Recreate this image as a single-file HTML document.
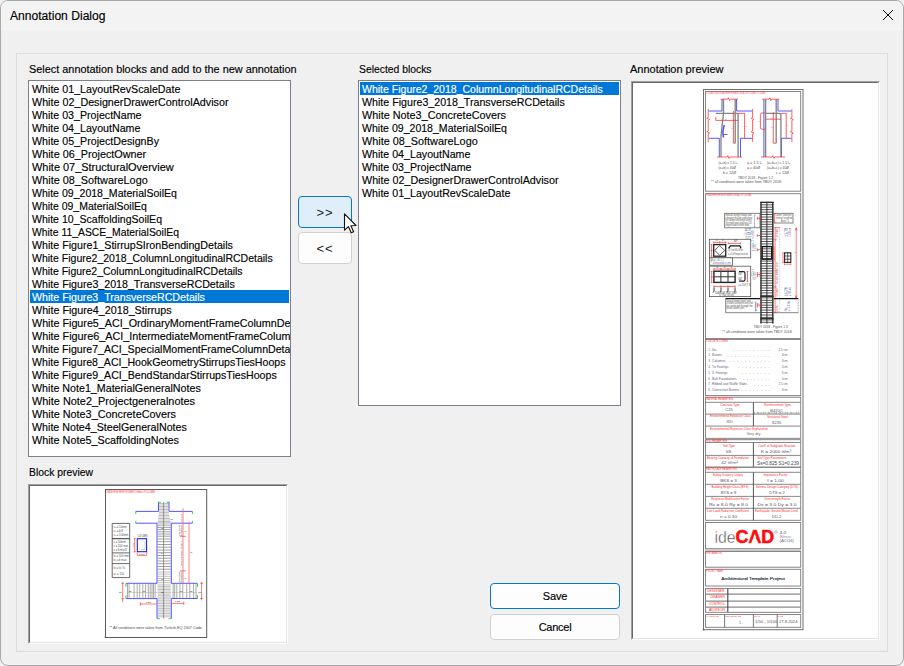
<!DOCTYPE html>
<html><head><meta charset="utf-8"><title>Annotation Dialog</title>
<style>
html,body{margin:0;padding:0;width:904px;height:666px;overflow:hidden;background:#f0f0f0;font-family:"Liberation Sans", sans-serif;font-size:11px;color:#000;-webkit-text-stroke:0.15px currentColor}
#win{position:absolute;left:0;top:0;width:902px;height:664px;border:1px solid #a9a9a9;border-radius:8px;background:#f0f0f0;overflow:hidden}
#tb{position:absolute;left:0;top:0;width:902px;height:30px;background:#f3f3f3}
.abs{position:absolute}
.lab{position:absolute;line-height:13px;height:13px;white-space:nowrap}
.lb span{position:relative;top:0.6px}
.lab span,.lb span{display:inline-block;transform-origin:0 50%;white-space:nowrap}
#grp{position:absolute;left:16px;top:53px;width:870px;height:597px;border:1px solid #dcdcdc}
.lb{position:absolute;background:#fff;border:1px solid #7b818c;box-sizing:border-box;padding:1px;overflow:hidden}
.lb div{height:13px;line-height:13px;padding-left:2px;white-space:nowrap;overflow:visible}
.lb div.sel{background:#0078d7;color:#fff}
.btn{position:absolute;box-sizing:border-box;border:1px solid #d0d0d0;border-radius:4px;background:#fdfdfd;text-align:center;line-height:13px}
.sunk{position:absolute;box-sizing:border-box;background:#fff;border-style:solid;border-width:1px;border-color:#a0a0a0 #fff #fff #a0a0a0}
.sunk>i{position:absolute;left:0;top:0;right:0;bottom:0;border-style:solid;border-width:1px;border-color:#696969 #e3e3e3 #e3e3e3 #696969}
svg{position:absolute;left:0;top:0}
</style></head><body>
<div id="win">
<div id="tb"></div>
</div>
<div class="lab" style="left:10px;top:9px;font-size:12px;line-height:15px;height:15px"><span style="transform:scaleX(1.0081)">Annotation Dialog</span></div>
<svg class="abs" style="left:882px;top:9px" width="12" height="12" viewBox="0 0 12 12"><path d="M1 1L11 11M11 1L1 11" stroke="#000" stroke-width="1" fill="none"/></svg>
<div id="grp"></div>
<div class="lab" style="left:28.8px;top:63px"><span style="transform:scaleX(0.9896)">Select annotation blocks and add to the new annotation</span></div>
<div class="lab" style="left:358.8px;top:63px"><span style="transform:scaleX(0.9410)">Selected blocks</span></div>
<div class="lab" style="left:630.3px;top:63px"><span style="transform:scaleX(0.9993)">Annotation preview</span></div>
<div class="lab" style="left:28.8px;top:466px"><span style="transform:scaleX(0.9431)">Block preview</span></div>
<div class="lb" style="left:28px;top:80px;width:263px;height:377px">
<div><span style="transform:scaleX(0.9707)">White 01_LayoutRevScaleDate</span></div>
<div><span style="transform:scaleX(0.9769)">White 02_DesignerDrawerControlAdvisor</span></div>
<div><span style="transform:scaleX(0.9681)">White 03_ProjectName</span></div>
<div><span style="transform:scaleX(0.9687)">White 04_LayoutName</span></div>
<div><span style="transform:scaleX(0.9706)">White 05_ProjectDesignBy</span></div>
<div><span style="transform:scaleX(0.9830)">White 06_ProjectOwner</span></div>
<div><span style="transform:scaleX(0.9947)">White 07_StructuralOverview</span></div>
<div><span style="transform:scaleX(0.9853)">White 08_SoftwareLogo</span></div>
<div><span style="transform:scaleX(0.9593)">White 09_2018_MaterialSoilEq</span></div>
<div><span style="transform:scaleX(0.9531)">White 09_MaterialSoilEq</span></div>
<div><span style="transform:scaleX(0.9590)">White 10_ScaffoldingSoilEq</span></div>
<div><span style="transform:scaleX(0.9435)">White 11_ASCE_MaterialSoilEq</span></div>
<div><span style="transform:scaleX(0.9692)">White Figure1_StirrupSIronBendingDetails</span></div>
<div><span style="transform:scaleX(0.9555)">White Figure2_2018_ColumnLongitudinalRCDetails</span></div>
<div><span style="transform:scaleX(0.9515)">White Figure2_ColumnLongitudinalRCDetails</span></div>
<div><span style="transform:scaleX(0.9685)">White Figure3_2018_TransverseRCDetails</span></div>
<div class="sel"><span style="transform:scaleX(0.9674)">White Figure3_TransverseRCDetails</span></div>
<div><span style="transform:scaleX(0.9757)">White Figure4_2018_Stirrups</span></div>
<div><span style="transform:scaleX(0.9762)">White Figure5_ACI_OrdinaryMomentFrameColumnDetails</span></div>
<div><span style="transform:scaleX(0.9811)">White Figure6_ACI_IntermediateMomentFrameColumnDetails</span></div>
<div><span style="transform:scaleX(0.9652)">White Figure7_ACI_SpecialMomentFrameColumnDetails</span></div>
<div><span style="transform:scaleX(0.9635)">White Figure8_ACI_HookGeometryStirrupsTiesHoops</span></div>
<div><span style="transform:scaleX(0.9659)">White Figure9_ACI_BendStandarStirrupsTiesHoops</span></div>
<div><span style="transform:scaleX(0.9721)">White Note1_MaterialGeneralNotes</span></div>
<div><span style="transform:scaleX(0.9910)">White Note2_Projectgeneralnotes</span></div>
<div><span style="transform:scaleX(0.9855)">White Note3_ConcreteCovers</span></div>
<div><span style="transform:scaleX(0.9700)">White Note4_SteelGeneralNotes</span></div>
<div><span style="transform:scaleX(0.9819)">White Note5_ScaffoldingNotes</span></div>
</div>
<div class="lb" style="left:358px;top:80px;width:263px;height:326px">
<div class="sel"><span style="transform:scaleX(0.9555)">White Figure2_2018_ColumnLongitudinalRCDetails</span></div>
<div><span style="transform:scaleX(0.9685)">White Figure3_2018_TransverseRCDetails</span></div>
<div><span style="transform:scaleX(0.9855)">White Note3_ConcreteCovers</span></div>
<div><span style="transform:scaleX(0.9593)">White 09_2018_MaterialSoilEq</span></div>
<div><span style="transform:scaleX(0.9853)">White 08_SoftwareLogo</span></div>
<div><span style="transform:scaleX(0.9687)">White 04_LayoutName</span></div>
<div><span style="transform:scaleX(0.9681)">White 03_ProjectName</span></div>
<div><span style="transform:scaleX(0.9769)">White 02_DesignerDrawerControlAdvisor</span></div>
<div><span style="transform:scaleX(0.9707)">White 01_LayoutRevScaleDate</span></div>
</div>
<div class="btn" style="left:298px;top:196px;width:54px;height:32px;background:#e0eef9;border-color:#0078d4;padding-top:9px;font-size:13px;letter-spacing:0.8px;-webkit-text-stroke:0;color:#222">&gt;&gt;</div>
<div class="btn" style="left:298px;top:232px;width:54px;height:32px;padding-top:9px;font-size:13px;letter-spacing:0.8px;-webkit-text-stroke:0;color:#222">&lt;&lt;</div>
<div class="btn" style="left:490px;top:583px;width:130px;height:26px;border-color:#0078d4;padding-top:5.5px;letter-spacing:-0.15px">Save</div>
<div class="btn" style="left:490px;top:614px;width:130px;height:26px;padding-top:5.5px;letter-spacing:-0.25px">Cancel</div>
<div class="sunk" style="left:28px;top:484px;width:260px;height:160px"><i></i></div>
<div class="sunk" style="left:631px;top:81px;width:249px;height:559px"><i></i></div>
<svg class="abs" width="904" height="666" viewBox="0 0 904 666" font-family="Liberation Sans, sans-serif">
<rect x="105.5" y="489.5" width="101.2" height="148" fill="#fff" stroke="#5c5c5c" stroke-width="1"/>
<text x="106.3" y="492.9" font-size="3.1" fill="#ff2020" textLength="49" lengthAdjust="spacingAndGlyphs">TRANSVERSE REINFORCEMENT DETAILS OF COLUMNS</text>
<path d="M157.5 523.0H170.8M157.5 525.2H170.8M157.5 527.4H170.8M157.5 529.6H170.8M157.5 531.8H170.8M157.5 534.0H170.8M157.5 536.2H170.8M157.5 539.0H170.8M157.5 541.7H170.8M157.5 544.5H170.8M157.5 547.2H170.8M157.5 550.0H170.8M157.5 552.7H170.8M157.5 555.5H170.8M157.5 558.2H170.8M157.5 561.0H170.8M157.5 563.7H170.8M157.5 566.5H170.8M157.5 569.2H170.8" stroke="#707070" stroke-width="0.65" fill="none"/>
<path d="M159.0 503.5H168.5M159.0 505.0H168.5M159.0 506.5H168.5M159.0 508.0H168.5M159.0 509.5H168.5M159.0 511.0H168.5M158.9 512.5H168.7M158.7 514.0H169.0M158.5 515.5H169.3M158.3 517.0H169.6M158.1 518.5H169.9M157.9 520.0H170.2M157.7 521.5H170.5M157.5 572.0H170.8M157.5 574.1H170.8M157.5 576.3H170.8M157.5 578.4H170.8M157.5 580.6H170.8M157.5 582.7H170.8M157.5 584.9H170.8M157.5 586.4H170.8M157.5 588.0H170.8M157.5 589.5H170.8M157.5 591.0H170.8M157.5 592.6H170.8M157.5 594.1H170.8M157.5 595.7H170.8M157.5 597.2H170.8M157.5 598.8H170.8M157.5 600.3H170.8M157.5 602.0H170.8M157.5 603.6H170.8M157.5 605.3H170.8M157.5 606.9H170.8M157.5 608.6H170.8M157.5 610.2H170.8M157.5 611.9H170.8M157.5 613.5H170.8M157.5 615.2H170.8M157.5 616.8H170.8" stroke="#6a6a6a" stroke-width="0.42" fill="none"/>
<path d="M163.6 502V618.5" stroke="#707070" stroke-width="0.7" fill="none"/>
<path d="M127.5 584V598M129.1 584V598M134.1 584V598M137.2 584V598M139.7 584V598M142.8 584V598M145.6 584V598M148.3 584V598M150.2 584V598M152.0 584V598M153.5 584V598M155.1 584V598M173.1 584V598M174.7 584V598M176.8 584V598M179.9 584V598M182.8 584V598M186.7 584V598M189.8 584V598M193.6 584V598M196.0 584V598" stroke="#888" stroke-width="0.7" fill="none"/>
<path d="M127 592.5H157M171.3 592.5H197" stroke="#aaa" stroke-width="0.5" fill="none"/>
<path d="M158.5 502.2V511.4H135.6M169 502.2V511.4H192.4M135.6 523.2H157V583.3H125.7M192.4 523.2H171.3V583.3H197.6M125.7 598.6H157V618.6M197.6 598.5H171.3V618.6" stroke="#5454ff" stroke-width="1" fill="none"/>
<path d="M158 502.2H161M166.5 502.2H169.6M135.8 511.4V514M135.8 520.8V523.2M192.4 511.4V514M192.4 520.8V523.2M125.9 583.8V586.8M125.9 595.2V598.2M197.5 583.8V586.8M197.5 595.2V598.2M157 618.7H159.8M168.5 618.7H171.3" stroke="#30d050" stroke-width="1" fill="none"/>
<path d="M183 508.3V583.3M189 521.6V583.3" stroke="#ff6a6a" stroke-width="0.85" fill="none"/>
<path d="M179.8 536.4H185.8M179.8 570.9H185.8M122.7 582V602M121.2 583.3H124.2M121.2 598.7H124.2M201.6 582V600.4M200.1 583.3H203.1M200.1 598.5H203.1M140.3 604H156.8M140.5 602.2V605.8M171.3 603.4H184M183.8 601.6V605.2" stroke="#ff4545" stroke-width="0.7" fill="none"/>
<g font-size="2.5" fill="#222"><text transform="translate(181.6 522.3) rotate(-90)" textLength="8" lengthAdjust="spacingAndGlyphs">min 5cm</text><text transform="translate(180 536) rotate(-90)" textLength="11" lengthAdjust="spacingAndGlyphs">sarilma</text><text transform="translate(182 536) rotate(-90)" textLength="11" lengthAdjust="spacingAndGlyphs">bolgesi</text><text transform="translate(182 566) rotate(-90)" textLength="25" lengthAdjust="spacingAndGlyphs">kolon orta bolgesi  s ≤ 20cm</text><text transform="translate(180 582.5) rotate(-90)" textLength="11" lengthAdjust="spacingAndGlyphs">sarilma</text><text transform="translate(182 582.5) rotate(-90)" textLength="11" lengthAdjust="spacingAndGlyphs">bolgesi</text><text x="184.6" y="531.5">lo</text><text x="184.6" y="579">lo</text><text x="190.3" y="553">ln</text><text x="161" y="529">sc</text><text x="161" y="553.5">s</text><text x="161" y="580">sc</text><text x="161" y="592.5">sk</text><text x="170.5" y="520">sc</text><text x="146" y="603">1.5h</text><text x="175" y="602.4">1.5h</text><text x="119" y="592.5">hk</text><text x="198.3" y="592.5">hk</text><text x="129" y="591.5">sk</text><text x="143" y="591.5">sk</text><text x="180" y="592">sk</text><text x="190" y="591.5">sk</text></g>
<path d="M112.2 523.4H129.7V577.6H112.2ZM112.2 552.9H129.7M112.2 563.6H129.7" stroke="#444" stroke-width="0.8" fill="none"/>
<path d="M112.2 538.7H129.7" stroke="#333" stroke-width="1" fill="none"/>
<g font-size="2.8" fill="#555"><text x="113.5" y="528.3">s<tspan font-size="2">o</tspan> ≥ 50mm</text><text x="113.5" y="532">s<tspan font-size="2">o</tspan> ≤ b/3</text><text x="113.5" y="536.3">s<tspan font-size="2">o</tspan> ≤ 100mm</text><text x="113.5" y="543">s ≥ 50mm</text><text x="113.5" y="546.8">s ≤ 200 mm</text><text x="113.5" y="551">s ≤ b min/2</text><text x="113.5" y="556.5">lo ≥ 500 mm</text><text x="113.5" y="561">lo ≥ b max</text><text x="113.5" y="568.5">lo ≥ ln / 6</text><text x="113.5" y="574.8">sc ≤ 150</text></g>
<text x="137.4" y="536.5" font-size="2.7" fill="#444" textLength="10" lengthAdjust="spacingAndGlyphs">COLUMN</text>
<rect x="137.3" y="538.7" width="9.3" height="13" fill="none" stroke="#2525d0" stroke-width="1.1"/>
<path d="M145 541V549.5H141" stroke="#aaa" stroke-width="0.5" fill="none"/>
<path d="M134.7 538.2V552.2M133.5 538.7H135.9M133.5 551.7H135.9M137.3 552.4V555.4H146.6V552.4" stroke="#ff4545" stroke-width="0.7" fill="none"/>
<text x="139.2" y="554.7" font-size="2.3" fill="#444">b min</text>
<text transform="translate(134.3 549) rotate(-90)" font-size="2.3" fill="#444">b max</text>
<text x="109.3" y="628.7" font-size="3.4" fill="#4a4a4a" textLength="92.6" lengthAdjust="spacingAndGlyphs">**  All conditions were taken from Turkish EQ 2007 Code</text>
<rect x="104.7" y="636.5" width="1.4" height="1.4" fill="#6040d0"/>
</svg>
<svg class="abs" width="904" height="666" viewBox="0 0 904 666" font-family="Liberation Sans, sans-serif">
<rect x="703.5" y="89.5" width="99.5" height="540.2" stroke="#707070" stroke-width="1" fill="none"/>
<rect x="705.5" y="91.5" width="95.2" height="99.7" stroke="#7a7a7a" stroke-width="0.9" fill="none"/>
<text x="706.3" y="93.6" font-size="3" fill="#ff2a2a" textLength="59" lengthAdjust="spacingAndGlyphs" >COLUMN LONGITUDINAL REINFORCEMENT DETAILS OF COLUMN TO COLUMN</text>
<path d="M722 99.2V111H708.8M736.6 99.2V111H752.2M708.8 138.3H719.3V157M752.2 138.3H740.5V157" stroke="#5555ff" stroke-width="1" fill="none" />
<path d="M723.5 99.2V113.3L721 135.6V157M738.1 113.3V157M735.2 99.2V143.2M715.8 113.3H738.1" stroke="#858585" stroke-width="1.35" fill="none" />
<path d="M720.5 99.2H727.5L728.3 97.8L729.5 100.6L730.3 99.2H738M717 157H727L727.8 155.6L729 158.4L729.8 157H742M708.2 109V117.5L706.8 118.3L709.6 119.5L708.2 120.3V131L706.8 131.8L709.6 133L708.2 133.8V142M752.6 109V117.5L751.2 118.3L754 119.5L752.6 120.3V131L751.2 131.8L754 133L752.6 133.8V142M715.8 117V120.4H738.1M733.4 111V143.2H735.2M738.1 113.3H744.6V138.3" stroke="#ff2a2a" stroke-width="0.75" fill="none" />
<path d="M724.3 125C723 129 722.6 134 723.6 137.5" stroke="#5555ff" stroke-width="1.6" fill="none" />
<path d="M723.8 134.5H727.5" stroke="#445" stroke-width="0.8" fill="none" />
<path d="M763.9 99.2V157M778 99.2V111H791.5M791.5 138.3H781.5V157" stroke="#5555ff" stroke-width="1" fill="none" />
<path d="M765.6 99.2V157M776.2 99.2V143.2M780.9 115V157M765.6 113.3H779.5Q780.9 113.3 780.9 115" stroke="#858585" stroke-width="1.35" fill="none" />
<path d="M762 99.2H769L769.8 97.8L771 100.6L771.8 99.2H779M761 157H772L772.8 155.6L774 158.4L774.8 157H785M791.9 109V117.5L790.5 118.3L793.3 119.5L791.9 120.3V131L790.5 131.8L793.3 133L791.9 133.8V142M765 113H762Q760.4 113 760.4 114.6V127.6Q760.4 129.2 762 129.2H765M765.6 119.2H781M773.3 112V143.2H776.2M781 113.3H786.2V138.3" stroke="#ff2a2a" stroke-width="0.75" fill="none" />
<text x="725" y="119.5" font-size="2.4" fill="#6a7a8a" >b</text>
<text x="731" y="128.5" font-size="2.4" fill="#6a7a8a" >a</text>
<text x="745.5" y="126.5" font-size="2.4" fill="#6a7a8a" >b</text>
<text x="758.4" y="122" font-size="2.4" fill="#6a7a8a" >c</text>
<text x="770.5" y="118.5" font-size="2.4" fill="#6a7a8a" >b</text>
<text x="771" y="128" font-size="2.4" fill="#6a7a8a" >a</text>
<text x="786.5" y="126" font-size="2.4" fill="#6a7a8a" >b</text>
<text x="718.5" y="164.4" font-size="3" fill="#505050" textLength="19" lengthAdjust="spacingAndGlyphs" >(a+b) ≥ 1.5 l<tspan font-size="2">b</tspan></text>
<text x="747" y="164.4" font-size="3" fill="#505050" textLength="15" lengthAdjust="spacingAndGlyphs" >a  ≥ 1.5 l<tspan font-size="2">b</tspan></text>
<text x="767" y="164.4" font-size="3" fill="#505050" textLength="23" lengthAdjust="spacingAndGlyphs" >(a+b+c) ≥ 1.5 l<tspan font-size="2">b</tspan></text>
<text x="718.5" y="169" font-size="3" fill="#505050" textLength="17.5" lengthAdjust="spacingAndGlyphs" >(a+b) ≥ 40Ø</text>
<text x="747" y="169" font-size="3" fill="#505050" textLength="13" lengthAdjust="spacingAndGlyphs" >a  ≥ 40Ø</text>
<text x="767" y="169" font-size="3" fill="#505050" textLength="22" lengthAdjust="spacingAndGlyphs" >(a+b+c) ≥ 40Ø</text>
<text x="723" y="173.5" font-size="3" fill="#505050" textLength="13" lengthAdjust="spacingAndGlyphs" >b  ≥ 12Ø</text>
<text x="776" y="173.5" font-size="3" fill="#505050" textLength="13" lengthAdjust="spacingAndGlyphs" >c  ≥ 12Ø</text>
<text x="738" y="179" font-size="3.2" fill="#505050" textLength="35" lengthAdjust="spacingAndGlyphs" >TBDY 2018 - Figure 1.2</text>
<text x="711" y="183.2" font-size="3.2" fill="#505050" textLength="71" lengthAdjust="spacingAndGlyphs" >**  all conditions were taken from TBDY 2018.</text>
<rect x="705.5" y="193.7" width="95.2" height="144.9" stroke="#7a7a7a" stroke-width="0.9" fill="none"/>
<text x="706.3" y="195.9" font-size="3" fill="#ff2a2a" textLength="45" lengthAdjust="spacingAndGlyphs" >TRANSVERSE REINFORCEMENT DETAILS OF COLUMN</text>
<path d="M760.3 202.3H773.4M760.3 204.8H773.4M760.3 207.2H773.4M760.3 209.6H773.4M760.3 212.1H773.4M760.3 214.5H773.4M760.3 217.0H773.4M760.3 219.4H773.4M760.3 221.9H773.4M760.3 224.3H773.4M760.3 226.8H773.4M760.3 229.2H773.4M760.3 231.7H773.4M760.3 234.1H773.4M760.3 236.6H773.4M760.3 239.0H773.4M760.3 241.5H773.4M760.3 243.9H773.4M760.3 246.4H773.4M760.3 248.8H773.4M760.3 251.3H773.4M760.3 253.7H773.4M760.3 256.2H773.4M760.3 258.6H773.4M760.3 261.1H773.4M760.3 263.5H773.4M760.3 266.0H773.4M760.3 268.4H773.4M760.3 270.9H773.4M760.3 273.3H773.4M760.3 275.8H773.4M760.3 278.2H773.4M760.3 280.7H773.4M760.3 283.1H773.4M760.3 285.6H773.4M760.3 288.0H773.4M760.3 290.5H773.4M760.3 292.9H773.4M760.3 295.4H773.4M760.3 297.8H773.4M760.3 300.3H773.4M760.3 302.7H773.4M760.3 305.2H773.4M760.3 307.6H773.4M760.3 310.1H773.4M760.3 312.5H773.4M760.3 315.0H773.4M760.3 317.4H773.4M760.3 319.9H773.4M760.3 322.3H773.4" stroke="#505050" stroke-width="0.95" fill="none" />
<path d="M761 202V323.6M772.8 202V323.6" stroke="#2e2e2e" stroke-width="1.4" fill="none" />
<path d="M766.9 202V323.6" stroke="#2e2e2e" stroke-width="1.0" fill="none" />
<path d="M760.2 202.3H773.6M760.2 296.4H773.6M760.2 318.6H773.6" stroke="#2e2e2e" stroke-width="1.3" fill="none" />
<rect x="762.2" y="246.6" width="9.5" height="12.6" stroke="#111" stroke-width="1.3" fill="none"/>
<rect x="724.7" y="213.3" width="35.3" height="14.5" stroke="#666" stroke-width="0.8" fill="#fff"/>
<rect x="773.7" y="213.3" width="19.3" height="9.7" stroke="#666" stroke-width="0.8" fill="#fff"/>
<text x="725.6" y="216.2" font-size="2.9" fill="#4c4c4c" textLength="26" lengthAdjust="spacingAndGlyphs" >Special seismic hoops and</text>
<text x="725.6" y="218.64999999999998" font-size="2.9" fill="#4c4c4c" textLength="26.5" lengthAdjust="spacingAndGlyphs" >crossties shall be used along</text>
<text x="725.6" y="221.1" font-size="2.9" fill="#4c4c4c" textLength="26" lengthAdjust="spacingAndGlyphs" >the column confinement zones.</text>
<text x="725.6" y="223.54999999999998" font-size="2.9" fill="#4c4c4c" textLength="26.5" lengthAdjust="spacingAndGlyphs" >The end of hoops shall have 135°</text>
<text x="725.6" y="226.0" font-size="2.9" fill="#4c4c4c" textLength="24" lengthAdjust="spacingAndGlyphs" >degree hooks at both ends.</text>
<text x="775.5" y="216.3" font-size="2.9" fill="#4c4c4c" textLength="16" lengthAdjust="spacingAndGlyphs" >Column - beam joint</text>
<text x="776" y="219.0" font-size="2.9" fill="#4c4c4c" textLength="16" lengthAdjust="spacingAndGlyphs" >confined   /   unconfined</text>
<text x="781" y="221.70000000000002" font-size="2.9" fill="#4c4c4c" textLength="8" lengthAdjust="spacingAndGlyphs" >Article 7.5</text>
<path d="M754.6 215V226.5M753.8 215H755.4M753.8 226.5H755.4" stroke="#6070b0" stroke-width="0.5" fill="none" />
<path d="M757.3 216.8V219.8M760 216.8V219.8M757.3 218.3H760M757.3 234.2V236.8M757.3 235.5H760M757.3 248.5V251.2M757.3 249.8H760M757.5 272V277.2M760.2 272V277.2M757.5 274.6H760.2M757.6 303V307.2M760.3 303V307.2M757.6 305.1H760.3" stroke="#ff2a2a" stroke-width="0.7" fill="none" />
<path d="M774.6 213.5V222.8M773.8 213.6H775.6M773.8 222.7H775.6M775.1 227.5V312.5M773.7 227.6H780M773.7 239.8H776.8M773.7 286.9H776.8M773.7 312.4H776.8M774 246.6V261M796.2 228V298M795.3 230.5L796.2 227.6L797.1 230.5M795.3 295.5L796.2 298.4L797.1 295.5" stroke="#ff2a2a" stroke-width="0.6" fill="none" />
<path d="M779.7 228V312" stroke="#999" stroke-width="0.5" fill="none" stroke-dasharray="0.8 0.8"/>
<text transform="translate(746.5 238.5) rotate(-90)" font-size="2.8" fill="#4c5c90" textLength="10.5" lengthAdjust="spacingAndGlyphs">s ≥ 50 mm</text>
<text transform="translate(748.8 238.5) rotate(-90)" font-size="2.8" fill="#4c5c90" textLength="10.5" lengthAdjust="spacingAndGlyphs">s ≤ b min / 3</text>
<text transform="translate(751.2 238.5) rotate(-90)" font-size="2.8" fill="#4c5c90" textLength="10.5" lengthAdjust="spacingAndGlyphs">s ≤ 150 mm</text>
<text transform="translate(753.6 238.5) rotate(-90)" font-size="2.8" fill="#4c5c90" textLength="8" lengthAdjust="spacingAndGlyphs">s ≤ 6 Ø</text>
<text transform="translate(754.3 251) rotate(-90)" font-size="2.8" fill="#4c5c90" textLength="11" lengthAdjust="spacingAndGlyphs">s ≤ b min / 2</text>
<text transform="translate(756.4 251) rotate(-90)" font-size="2.8" fill="#4c5c90" textLength="7" lengthAdjust="spacingAndGlyphs">s ≤ 200</text>
<text transform="translate(754.2 279.5) rotate(-90)" font-size="2.8" fill="#4c5c90" textLength="11" lengthAdjust="spacingAndGlyphs">s ≤ 150 mm</text>
<text transform="translate(756.4 279.5) rotate(-90)" font-size="2.8" fill="#4c5c90" textLength="7" lengthAdjust="spacingAndGlyphs">s ≤ b/3</text>
<text transform="translate(756.5 311) rotate(-90)" font-size="2.8" fill="#4c5c90" textLength="9" lengthAdjust="spacingAndGlyphs">s ≤ 150 mm</text>
<text transform="translate(786 236.5) rotate(-90)" font-size="2.8" fill="#4c5c90" textLength="8.5" lengthAdjust="spacingAndGlyphs">≥ b max</text>
<text transform="translate(788.3 236.5) rotate(-90)" font-size="2.8" fill="#4c5c90" textLength="8.5" lengthAdjust="spacingAndGlyphs">≥ ln / 6</text>
<text transform="translate(790.5 236.5) rotate(-90)" font-size="2.8" fill="#4c5c90" textLength="8.5" lengthAdjust="spacingAndGlyphs">≥ 500 mm</text>
<text transform="translate(778.4 237) rotate(-90)" font-size="2.6" fill="#c05050" textLength="9" lengthAdjust="spacingAndGlyphs">confinement</text>
<text transform="translate(778.4 284) rotate(-90)" font-size="2.6" fill="#c05050" textLength="22" lengthAdjust="spacingAndGlyphs">column middle zone</text>
<text transform="translate(778.4 296.5) rotate(-90)" font-size="2.6" fill="#c05050" textLength="9" lengthAdjust="spacingAndGlyphs">confinement</text>
<text transform="translate(778.4 311.5) rotate(-90)" font-size="2.6" fill="#c05050" textLength="6" lengthAdjust="spacingAndGlyphs">joint</text>
<text transform="translate(786 296) rotate(-90)" font-size="2.8" fill="#4c5c90" textLength="8.5" lengthAdjust="spacingAndGlyphs">≥ b max</text>
<text transform="translate(788.3 296) rotate(-90)" font-size="2.8" fill="#4c5c90" textLength="8.5" lengthAdjust="spacingAndGlyphs">≥ ln / 6</text>
<text transform="translate(790.5 296) rotate(-90)" font-size="2.8" fill="#4c5c90" textLength="8.5" lengthAdjust="spacingAndGlyphs">≥ 500 mm</text>
<text transform="translate(786.5 311) rotate(-90)" font-size="2.8" fill="#4c5c90" textLength="3" lengthAdjust="spacingAndGlyphs">hk</text>
<text transform="translate(790 311) rotate(-90)" font-size="2.8" fill="#4c5c90" textLength="10" lengthAdjust="spacingAndGlyphs">≥ 1.5 hk</text>
<text x="794.3" y="252.5" font-size="2.2" fill="#a05050" >ln</text>
<rect x="784.6" y="252.8" width="6.2" height="9.6" stroke="#222" stroke-width="1.1" fill="none"/>
<path d="M787.7 252.8V262.4M784.6 256V256M784.6 256H790.8M784.6 259.2H790.8" stroke="#333" stroke-width="0.8" fill="none" />
<path d="M783 252.6V262.6M782.3 252.8H783.7M782.3 262.4H783.7M784.4 264.2H791M784.6 263.4V265M790.8 263.4V265" stroke="#ff2a2a" stroke-width="0.6" fill="none" />
<rect x="709.5" y="239.3" width="41.2" height="18.5" stroke="#555" stroke-width="0.8" fill="#fff"/>
<rect x="713.7" y="244.6" width="12.0" height="11.6" stroke="#222" stroke-width="1.3" fill="none"/>
<path d="M719.7 245.6L724.7 250.4L719.7 255.2L714.7 250.4Z" stroke="#333" stroke-width="0.8" fill="none" />
<path d="M713.7 242.4H725.8M713.8 241.4V243.4M719.7 241.4V243.4M725.7 241.4V243.4M711.6 244.5V256.3M710.7 244.6H712.5M710.7 250.4H712.5M710.7 256.2H712.5M728.2 243.4H740.5M728.3 242.4V244.4M740.4 242.4V244.4" stroke="#ff2a2a" stroke-width="0.7" fill="none" />
<path d="M728.6 248.4L730.4 245.9H739.6Q740.6 245.9 740.6 246.9V248.6" stroke="#111" stroke-width="1.3" fill="none" />
<text x="716" y="241.3" font-size="2.6" fill="#4c4c4c" >a</text>
<text x="722" y="241.3" font-size="2.6" fill="#4c4c4c" >a</text>
<text x="733.5" y="242.4" font-size="2.6" fill="#4c4c4c" >6Ø</text>
<text x="728" y="251.3" font-size="2.8" fill="#4c4c4c" textLength="15" lengthAdjust="spacingAndGlyphs" >135° hook  6Ø ≥ 80 mm</text>
<text x="728" y="254.9" font-size="2.8" fill="#4c4c4c" textLength="20.5" lengthAdjust="spacingAndGlyphs" >a ≤ 25 Ø  hoop/crosstie dia.</text>
<rect x="709.5" y="257.8" width="23.1" height="7.4" stroke="#555" stroke-width="0.8" fill="#fff"/>
<text x="710.6" y="260.7" font-size="2.8" fill="#4c4c4c" textLength="13" lengthAdjust="spacingAndGlyphs" >Ash ≥ s . bk . (...)</text>
<text x="710.6" y="263.9" font-size="2.8" fill="#5a6aa0" textLength="20" lengthAdjust="spacingAndGlyphs" >** all dimensions in mm</text>
<rect x="709.5" y="266.2" width="41.2" height="30.4" stroke="#555" stroke-width="0.8" fill="#fff"/>
<rect x="713.9" y="271.2" width="21.2" height="11.2" stroke="#222" stroke-width="1.4" fill="none"/>
<path d="M720.9 271.2V282.4M728 271.2V282.4M713.9 276.8H735.1" stroke="#333" stroke-width="1" fill="none" />
<path d="M713.8 269H735.2M713.9 268V270M720.9 268V270M728 268V270M735.1 268V270M711.7 271V282.6M710.8 271.2H712.6M710.8 276.8H712.6M710.8 282.4H712.6M747.5 271.4V281.4M746.6 271.5H748.4M746.6 281.3H748.4M713.8 286.4H735.2M713.9 285.4V287.4M720.9 285.4V287.4M728 285.4V287.4M735.1 285.4V287.4" stroke="#ff2a2a" stroke-width="0.7" fill="none" />
<path d="M739 271.6H743.4Q745 271.6 745 273.2V279.6Q745 281.2 743.4 281.2H739" stroke="#222" stroke-width="1.2" fill="none" />
<path d="M714 287.5V291.5L712.8 292.3M721 287.5V291.5L719.8 292.3M728 287.5V291.5L726.8 292.3M735 287.5V291.5L733.8 292.3" stroke="#222" stroke-width="0.9" fill="none" />
<text x="716.5" y="268" font-size="2.6" fill="#4c4c4c" >a</text>
<text x="723.7" y="268" font-size="2.6" fill="#4c4c4c" >a</text>
<text x="730.8" y="268" font-size="2.6" fill="#4c4c4c" >a</text>
<text x="738.3" y="274.5" font-size="2.6" fill="#4c4c4c" >6Ø</text>
<text x="738.3" y="279.5" font-size="2.6" fill="#4c4c4c" >6Ø</text>
<text x="738.3" y="286.2" font-size="2.8" fill="#4c4c4c" textLength="12.2" lengthAdjust="spacingAndGlyphs" >a ≤ 25 Ø (7.3)</text>
<text x="714.5" y="293.5" font-size="2.6" fill="#4c4c4c" textLength="22" lengthAdjust="spacingAndGlyphs" >10Ø      10Ø      10Ø      10Ø</text>
<text x="719" y="295.6" font-size="2.8" fill="#4c4c4c" textLength="15" lengthAdjust="spacingAndGlyphs" >90° hook crossties</text>
<path d="M725.6 298.6H760.2M773.6 298.6H798.3" stroke="#111" stroke-width="1.3" fill="none" />
<path d="M725.7 298.6V312.7H760.2M773.6 312.7H798.3" stroke="#555" stroke-width="0.7" fill="none" />
<path d="M798.2 298.6V312.7" stroke="#777" stroke-width="0.6" fill="none" stroke-dasharray="0.9 0.7"/>
<text x="726.6" y="301.9" font-size="2.9" fill="#4c4c4c" textLength="24" lengthAdjust="spacingAndGlyphs" >Special seismic hoops used</text>
<text x="726.6" y="304.34999999999997" font-size="2.9" fill="#4c4c4c" textLength="26.5" lengthAdjust="spacingAndGlyphs" >in column confinement zones shall</text>
<text x="726.6" y="306.79999999999995" font-size="2.9" fill="#4c4c4c" textLength="26" lengthAdjust="spacingAndGlyphs" >be continued through the</text>
<text x="726.6" y="309.25" font-size="2.9" fill="#4c4c4c" textLength="18" lengthAdjust="spacingAndGlyphs" >beam column joint.</text>
<path d="M755.6 302V311M754.8 302H756.4M754.8 311H756.4" stroke="#6070b0" stroke-width="0.5" fill="none" />
<text x="753.4" y="327.9" font-size="3.2" fill="#505050" textLength="34.3" lengthAdjust="spacingAndGlyphs" >TBDY 2018 - Figure 1.3</text>
<text x="722.3" y="332.5" font-size="3.2" fill="#505050" textLength="70.3" lengthAdjust="spacingAndGlyphs" >**  all conditions were taken from TBDY 2018.</text>
<rect x="705.5" y="339.4" width="95.2" height="56.2" stroke="#7a7a7a" stroke-width="0.9" fill="none"/>
<text x="706.3" y="342.3" font-size="3.1" fill="#ff2a2a" textLength="22" lengthAdjust="spacingAndGlyphs" >CONCRETE COVERS</text>
<text x="708.2" y="350.6" font-size="3" fill="#667" >1.</text>
<text x="712" y="350.6" font-size="3" fill="#667" textLength="4.5" lengthAdjust="spacingAndGlyphs" >Slabs</text>
<text x="770" y="350.8" font-size="3" fill="#555" textLength="37" lengthAdjust="spacingAndGlyphs" text-anchor="end" >. . . . . . . . . .</text>
<text x="787.5" y="350.6" font-size="3" fill="#667" text-anchor="end" >2.5 cm</text>
<text x="708.2" y="356.39000000000004" font-size="3" fill="#667" >2.</text>
<text x="712" y="356.39000000000004" font-size="3" fill="#667" textLength="10" lengthAdjust="spacingAndGlyphs" >Beams</text>
<text x="770" y="356.59000000000003" font-size="3" fill="#555" textLength="43" lengthAdjust="spacingAndGlyphs" text-anchor="end" >. . . . . . . . . . . .</text>
<text x="787.5" y="356.39000000000004" font-size="3" fill="#667" text-anchor="end" >3cm</text>
<text x="708.2" y="362.18" font-size="3" fill="#667" >3.</text>
<text x="712" y="362.18" font-size="3" fill="#667" textLength="13.5" lengthAdjust="spacingAndGlyphs" >Columns</text>
<text x="770" y="362.38" font-size="3" fill="#555" textLength="41" lengthAdjust="spacingAndGlyphs" text-anchor="end" >. . . . . . . . . . .</text>
<text x="787.5" y="362.18" font-size="3" fill="#667" text-anchor="end" >3cm</text>
<text x="708.2" y="367.97" font-size="3" fill="#667" >4.</text>
<text x="712" y="367.97" font-size="3" fill="#667" textLength="16.5" lengthAdjust="spacingAndGlyphs" >Tie Footings</text>
<text x="770" y="368.17" font-size="3" fill="#555" textLength="32" lengthAdjust="spacingAndGlyphs" text-anchor="end" >. . . . . . . . .</text>
<text x="787.5" y="367.97" font-size="3" fill="#667" text-anchor="end" >5cm</text>
<text x="708.2" y="373.76000000000005" font-size="3" fill="#667" >5.</text>
<text x="712" y="373.76000000000005" font-size="3" fill="#667" textLength="15.5" lengthAdjust="spacingAndGlyphs" >S. Footings</text>
<text x="770" y="373.96000000000004" font-size="3" fill="#555" textLength="29" lengthAdjust="spacingAndGlyphs" text-anchor="end" >. . . . . . . .</text>
<text x="787.5" y="373.76000000000005" font-size="3" fill="#667" text-anchor="end" >5cm</text>
<text x="708.2" y="379.55" font-size="3" fill="#667" >6.</text>
<text x="712" y="379.55" font-size="3" fill="#667" textLength="24.5" lengthAdjust="spacingAndGlyphs" >Raft Foundations</text>
<text x="770" y="379.75" font-size="3" fill="#555" textLength="27" lengthAdjust="spacingAndGlyphs" text-anchor="end" >. . . . . . . .</text>
<text x="787.5" y="379.55" font-size="3" fill="#667" text-anchor="end" >5cm</text>
<text x="708.2" y="385.34000000000003" font-size="3" fill="#667" >7.</text>
<text x="712" y="385.34000000000003" font-size="3" fill="#667" textLength="35" lengthAdjust="spacingAndGlyphs" >Ribbed and Waffle Slabs</text>
<text x="770" y="385.54" font-size="3" fill="#555" textLength="16" lengthAdjust="spacingAndGlyphs" text-anchor="end" >. . . . .</text>
<text x="787.5" y="385.34000000000003" font-size="3" fill="#667" text-anchor="end" >2.5 cm</text>
<text x="708.2" y="391.13" font-size="3" fill="#667" >8.</text>
<text x="712" y="391.13" font-size="3" fill="#667" textLength="27" lengthAdjust="spacingAndGlyphs" >Connection Beams</text>
<text x="770" y="391.33" font-size="3" fill="#555" textLength="29" lengthAdjust="spacingAndGlyphs" text-anchor="end" >. . . . . . . .</text>
<text x="787.5" y="391.13" font-size="3" fill="#667" text-anchor="end" >3cm</text>
<rect x="705.5" y="397.2" width="95.2" height="41.1" stroke="#7a7a7a" stroke-width="0.9" fill="none"/>
<text x="706.3" y="400.2" font-size="3.1" fill="#ff2a2a" textLength="27" lengthAdjust="spacingAndGlyphs" >MATERIAL PARAMETERS</text>
<path d="M705.5 402.3H800.7M705.5 414.1H800.7M705.5 426.1H800.7" stroke="#7a7a7a" stroke-width="0.9" fill="none" />
<path d="M753.4 402.3V426.1" stroke="#444" stroke-width="0.9" fill="none" />
<text x="730" y="405.8" font-size="2.7" fill="#ff2a2a" textLength="19.5" lengthAdjust="spacingAndGlyphs" text-anchor="middle" >Concrete Type</text>
<text x="729.0" y="411.2" font-size="3.6" fill="#556" textLength="7.5" lengthAdjust="spacingAndGlyphs" text-anchor="middle" >C25</text>
<text x="777.5" y="406.2" font-size="2.7" fill="#ff2a2a" textLength="27" lengthAdjust="spacingAndGlyphs" text-anchor="middle" >Reinforcement Type</text>
<text x="776.5" y="411.59999999999997" font-size="3.6" fill="#556" textLength="12.5" lengthAdjust="spacingAndGlyphs" text-anchor="middle" >B420C</text>
<path d="M754 412.9H800" stroke="#444" stroke-width="0.6" fill="none" stroke-dasharray="1.2 0.7 0.5 0.6 2 0.5"/>
<text x="730.5" y="417.3" font-size="2.7" fill="#ff2a2a" textLength="41" lengthAdjust="spacingAndGlyphs" text-anchor="middle" >Environmental Exposure Class</text>
<text x="729.5" y="422.7" font-size="3.6" fill="#556" textLength="6.5" lengthAdjust="spacingAndGlyphs" text-anchor="middle" >XD</text>
<text x="777.5" y="418.2" font-size="2.7" fill="#ff2a2a" textLength="21" lengthAdjust="spacingAndGlyphs" text-anchor="middle" >Structural Steel</text>
<text x="776.5" y="423.59999999999997" font-size="3.4" fill="#556" textLength="9.5" lengthAdjust="spacingAndGlyphs" text-anchor="middle" >S235</text>
<text x="710" y="429.9" font-size="2.7" fill="#ff2a2a" textLength="58" lengthAdjust="spacingAndGlyphs" >Environmental Exposure Class Explanation</text>
<text x="753.5" y="435.3" font-size="3.2" fill="#667" textLength="13.5" lengthAdjust="spacingAndGlyphs" text-anchor="middle" >Very dry</text>
<rect x="705.5" y="439.7" width="95.2" height="27.5" stroke="#7a7a7a" stroke-width="0.9" fill="none"/>
<text x="706.3" y="441.7" font-size="3.1" fill="#ff2a2a" textLength="21" lengthAdjust="spacingAndGlyphs" >SOIL PARAMETERS</text>
<path d="M705.5 442.5H800.7M705.5 455.4H800.7" stroke="#7a7a7a" stroke-width="0.9" fill="none" />
<path d="M753.4 442.5V467.2" stroke="#444" stroke-width="0.9" fill="none" />
<text x="729" y="447" font-size="2.7" fill="#ff2a2a" textLength="12" lengthAdjust="spacingAndGlyphs" text-anchor="middle" >Soil Type</text>
<text x="728.5" y="452.8" font-size="4.2" fill="#667" textLength="5.5" lengthAdjust="spacingAndGlyphs" text-anchor="middle" >SB</text>
<text x="777" y="447" font-size="2.7" fill="#ff2a2a" textLength="37" lengthAdjust="spacingAndGlyphs" text-anchor="middle" >Coeff. of Subgrade Reaction</text>
<text x="776" y="452.8" font-size="3.9" fill="#556" textLength="30.5" lengthAdjust="spacingAndGlyphs" text-anchor="middle" >K = 2000 tf/m³</text>
<text x="728" y="458.5" font-size="2.7" fill="#ff2a2a" textLength="42" lengthAdjust="spacingAndGlyphs" text-anchor="middle" >Bearing Capacity of Foundation</text>
<text x="729.5" y="464.4" font-size="3.9" fill="#667" textLength="17" lengthAdjust="spacingAndGlyphs" text-anchor="middle" >42 tf/m²</text>
<text x="772" y="459" font-size="2.7" fill="#ff2a2a" textLength="29" lengthAdjust="spacingAndGlyphs" text-anchor="middle" >Soil Type Parameters</text>
<text x="778" y="464.6" font-size="4.6" fill="#445" textLength="42" lengthAdjust="spacingAndGlyphs" text-anchor="middle" >Ss=0.825  S1=0.239</text>
<rect x="705.5" y="467.2" width="95.2" height="53.1" stroke="#7a7a7a" stroke-width="0.9" fill="none"/>
<text x="706.3" y="470.3" font-size="3.1" fill="#ff2a2a" textLength="31" lengthAdjust="spacingAndGlyphs" >EARTHQUAKE PARAMETERS</text>
<path d="M705.5 472.3H800.7M705.5 484.3H800.7M705.5 496.4H800.7M705.5 508.3H800.7" stroke="#7a7a7a" stroke-width="0.9" fill="none" />
<path d="M753.4 472.3V520.3" stroke="#444" stroke-width="0.9" fill="none" />
<text x="728" y="476.2" font-size="2.7" fill="#ff2a2a" textLength="30" lengthAdjust="spacingAndGlyphs" text-anchor="middle" >Building Occupancy Category</text>
<text x="728.5" y="481.8" font-size="4.1" fill="#556" textLength="16.5" lengthAdjust="spacingAndGlyphs" text-anchor="middle" >BKS = 3</text>
<text x="775.5" y="476.2" font-size="2.7" fill="#ff2a2a" textLength="24" lengthAdjust="spacingAndGlyphs" text-anchor="middle" >Importance Factor</text>
<text x="775.5" y="481.8" font-size="4.1" fill="#556" textLength="16.5" lengthAdjust="spacingAndGlyphs" text-anchor="middle" >I = 1.00</text>
<text x="730" y="488.2" font-size="2.7" fill="#ff2a2a" textLength="37" lengthAdjust="spacingAndGlyphs" text-anchor="middle" >Building Height Class  (BYS)</text>
<text x="728.5" y="493.8" font-size="3.9" fill="#556" textLength="15.5" lengthAdjust="spacingAndGlyphs" text-anchor="middle" >BYS = 8</text>
<text x="777" y="488.2" font-size="2.7" fill="#ff2a2a" textLength="42" lengthAdjust="spacingAndGlyphs" text-anchor="middle" >Seismic  Design Category (DTS)</text>
<text x="777" y="493.8" font-size="3.9" fill="#556" textLength="15.5" lengthAdjust="spacingAndGlyphs" text-anchor="middle" >DTS = 2</text>
<text x="730" y="500" font-size="2.7" fill="#ff2a2a" textLength="38" lengthAdjust="spacingAndGlyphs" text-anchor="middle" >Response Modification Factor</text>
<text x="728.5" y="505.6" font-size="4.1" fill="#556" textLength="39" lengthAdjust="spacingAndGlyphs" text-anchor="middle" >Rx = 8.0   Ry = 8.0</text>
<text x="777" y="500" font-size="2.7" fill="#ff2a2a" textLength="26" lengthAdjust="spacingAndGlyphs" text-anchor="middle" >Overstrength Factor</text>
<text x="777" y="505.6" font-size="4.1" fill="#556" textLength="39" lengthAdjust="spacingAndGlyphs" text-anchor="middle" >Dx = 3.0   Dy = 3.0</text>
<text x="728" y="512" font-size="2.7" fill="#ff2a2a" textLength="42" lengthAdjust="spacingAndGlyphs" text-anchor="middle" >Live Load Reduction Coefficient</text>
<text x="728.5" y="517.6" font-size="3.6" fill="#556" textLength="17" lengthAdjust="spacingAndGlyphs" text-anchor="middle" >n = 0.30</text>
<text x="776.5" y="512" font-size="2.7" fill="#ff2a2a" textLength="43" lengthAdjust="spacingAndGlyphs" text-anchor="middle" >Earthquake Ground Motion Level</text>
<text x="776.5" y="517.6" font-size="3.4" fill="#556" textLength="9.5" lengthAdjust="spacingAndGlyphs" text-anchor="middle" >DD-2</text>
<rect x="705.5" y="522.5" width="95.2" height="26.2" stroke="#7a7a7a" stroke-width="0.9" fill="none"/>
<text x="714.4" y="542.9" font-size="17.2" fill="#4a4a4a" textLength="21" lengthAdjust="spacingAndGlyphs" font-weight="400" stroke="#fff" stroke-width="0.45">ide</text>
<text x="735.6" y="542.9" font-size="17.6" fill="#ff0d0d" textLength="38.6" lengthAdjust="spacingAndGlyphs" font-weight="700" stroke="#ff0d0d" stroke-width="0.6" stroke-linejoin="round">CAD</text>
<path d="M751.2 543.2L754.6 534.6L758 543.2Z" fill="#fff"/>
<circle cx="776" cy="532" r="1.3" fill="none" stroke="#888" stroke-width="0.5"/>
<text x="779.5" y="533.6" font-size="3.2" fill="#556" textLength="6.5" lengthAdjust="spacingAndGlyphs" font-style="italic">3.0</text>
<text x="779.5" y="537.7" font-size="3.2" fill="#889" textLength="12" lengthAdjust="spacingAndGlyphs" >Struc</text>
<text x="779.5" y="541.8" font-size="3.2" fill="#667" textLength="14.5" lengthAdjust="spacingAndGlyphs" >(ACI16)</text>
<rect x="705" y="549.1" width="96.2" height="2.2" fill="#c9c9c9"/>
<rect x="705.5" y="551.5" width="95.2" height="15.7" stroke="#7a7a7a" stroke-width="0.9" fill="none"/>
<text x="706.3" y="554.1" font-size="3.1" fill="#ff2a2a" textLength="15.5" lengthAdjust="spacingAndGlyphs" >EXPLANATION</text>
<rect x="705.5" y="569.3" width="95.2" height="16.7" stroke="#7a7a7a" stroke-width="0.9" fill="none"/>
<text x="706.3" y="572.1" font-size="3.1" fill="#ff2a2a" textLength="16.5" lengthAdjust="spacingAndGlyphs" >PROJECT NAME</text>
<text x="753" y="580" font-size="4.4" fill="#2c3850" textLength="63.5" lengthAdjust="spacingAndGlyphs" text-anchor="middle" stroke="#2c3850" stroke-width="0.18">Architectural Template Project</text>
<rect x="705.5" y="588.4" width="95.2" height="23.9" stroke="#7a7a7a" stroke-width="0.9" fill="none"/>
<path d="M705.5 594.2H800.7M705.5 601.1H800.7M705.5 607.2H800.7" stroke="#8a8a8a" stroke-width="1.3" fill="none" />
<path d="M727.8 588.4V612.3" stroke="#444" stroke-width="1.1" fill="none" />
<text x="707" y="592.4" font-size="3.1" fill="#ff2a2a" textLength="17.5" lengthAdjust="spacingAndGlyphs" >DESIGNER</text>
<text x="710.5" y="598.4" font-size="3.1" fill="#ff2a2a" textLength="14.5" lengthAdjust="spacingAndGlyphs" >DRAWER</text>
<text x="709" y="604.5" font-size="3.1" fill="#ff2a2a" textLength="16" lengthAdjust="spacingAndGlyphs" >CONTROL</text>
<text x="709" y="611" font-size="3.1" fill="#ff2a2a" textLength="16" lengthAdjust="spacingAndGlyphs" >ADVISOR</text>
<rect x="705.5" y="614.6" width="95.2" height="12.7" stroke="#7a7a7a" stroke-width="0.9" fill="none"/>
<path d="M724.6 614.6V627.3M753.4 614.6V627.3M777.2 614.6V627.3" stroke="#666" stroke-width="0.9" fill="none" />
<text x="706.2" y="617" font-size="2.4" fill="#ff2a2a" textLength="12.5" lengthAdjust="spacingAndGlyphs" >LAYOUT NO</text>
<text x="725.5" y="617" font-size="2.4" fill="#ff2a2a" textLength="15.5" lengthAdjust="spacingAndGlyphs" >REVISION NO</text>
<text x="754.5" y="617" font-size="2.4" fill="#ff2a2a" textLength="5.5" lengthAdjust="spacingAndGlyphs" >SCALE</text>
<text x="778" y="617" font-size="2.4" fill="#ff2a2a" textLength="5" lengthAdjust="spacingAndGlyphs" >DATE</text>
<text x="739" y="623.5" font-size="3.6" fill="#556" >1</text>
<text x="755" y="623.2" font-size="3.4" fill="#556" textLength="22" lengthAdjust="spacingAndGlyphs" >1/50  -  1/100</text>
<text x="779" y="623.2" font-size="3.4" fill="#556" textLength="18.5" lengthAdjust="spacingAndGlyphs" >27.8.2024</text>
<rect x="702.8" y="629" width="1.4" height="1.4" fill="#6040d0"/>
</svg>
<svg class="abs" style="left:343px;top:212px" width="16" height="23" viewBox="0 0 16 23"><path d="M1.5 1.8L1.5 18.2L5.4 14.6L8.2 20.8L10.6 19.7L7.9 13.7L13 13.5Z" fill="#fff" stroke="#111" stroke-width="1.1" stroke-linejoin="round"/></svg>
</body></html>
